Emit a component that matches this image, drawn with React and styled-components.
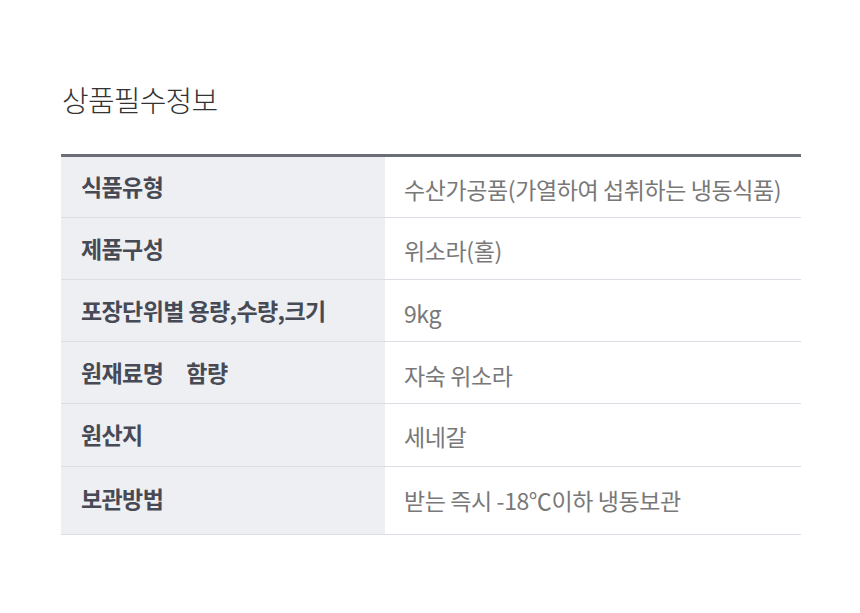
import styled, { createGlobalStyle } from "styled-components";

const GlobalStyle = createGlobalStyle`
  body {
    margin: 0;
    background: #ffffff;
    font-family: "Noto Sans CJK KR", "Noto Sans", sans-serif;
  }
`;

const Page = styled.div`
  width: 860px;
  padding: 82px 59px 0 61px;
  box-sizing: border-box;
`;

const Title = styled.h2`
  margin: 0 0 0 1px;
  font-size: 29px;
  line-height: 34px;
  font-weight: 300;
  color: #333333;
  letter-spacing: -0.8px;
`;

const Table = styled.div`
  margin-top: 38px;
  border-top: 3px solid #6b6e77;
`;

const Row = styled.div`
  display: grid;
  grid-template-columns: 324px 1fr;
  height: ${(p) => p.$height}px;
  box-sizing: border-box;
  border-bottom: 1px solid #dcdde5;
`;

const Label = styled.div`
  display: flex;
  align-items: center;
  padding: 0 0 ${(p) => p.$lift}px 20px;
  background: #eeeff3;
  font-size: 23px;
  font-weight: 700;
  color: #474a54;
  letter-spacing: -0.6px;
  white-space: pre;
`;

const Value = styled.div`
  display: flex;
  align-items: center;
  padding: ${(p) => (p.$drop > 0 ? p.$drop : 0)}px 0 ${(p) => (p.$drop < 0 ? -p.$drop : 0)}px 19px;
  font-size: 23px;
  font-weight: 400;
  color: #787878;
  letter-spacing: -0.4px;
  white-space: pre;
`;

const rows = [
  { label: "식품유형", value: "수산가공품(가열하여 섭취하는 냉동식품)", height: 61, drop: 3 },
  { label: "제품구성", value: "위소라(홀)" },
  { label: "포장단위별 용량,수량,크기", value: "9kg", drop: 5 },
  { label: "원재료명     함량", value: "자숙 위소라", drop: 4 },
  { label: "원산지", value: "세네갈", height: 63 },
  { label: "보관방법", value: "받는 즉시 -18℃이하 냉동보관", height: 68, lift: 6, drop: -2 },
];

export default function App() {
  return (
    <>
      <GlobalStyle />
      <Page>
        <Title>상품필수정보</Title>
        <Table>
          {rows.map((r) => (
            <Row key={r.label} $height={r.height || 62}>
              <Label $lift={r.lift || 2}>{r.label}</Label>
              <Value $drop={r.drop ?? 2}>{r.value}</Value>
            </Row>
          ))}
        </Table>
      </Page>
    </>
  );
}
